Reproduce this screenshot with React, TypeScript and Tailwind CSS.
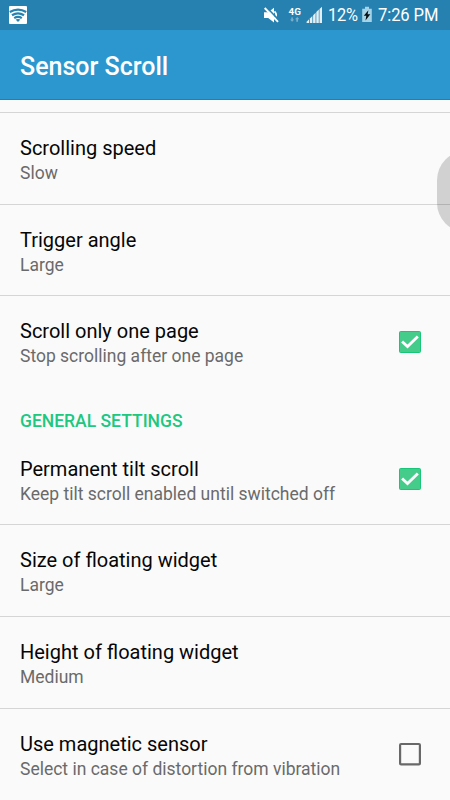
import React from "react";

function CheckBox({ checked }: { checked: boolean }) {
  return (
    <svg width="24" height="24" viewBox="0 0 24 24" className="mr-[28px] shrink-0">
      {checked ? (
        <>
          <rect x="1.5" y="1.5" width="21" height="21" rx="1" fill="#45cc8a" stroke="#18c678" />
          <path d="M4.1 11.4 9.5 16.5 19.8 6.4" fill="none" stroke="#fff" strokeWidth="2.8" />
        </>
      ) : (
        <rect x="2.1" y="2" width="19.8" height="20.4" rx="1" fill="none" stroke="#686868" strokeWidth="2.2" />
      )}
    </svg>
  );
}

type RowProps = { title: string; summary: string; checked?: boolean; divider?: boolean };

function Row({ title, summary, checked, divider = true }: RowProps) {
  return (
    <div
      className={
        "flex h-[91.7px] shrink-0 items-center justify-between border-t pl-5 " +
        (divider ? "border-[#d5d5d5]" : "border-transparent")
      }
    >
      <div className="whitespace-nowrap pt-[4px]">
        <div className="text-[20px] leading-[26px] text-[#060606]">{title}</div>
        <div className="text-[17.5px] leading-[25px] text-[#6a6a6a]">{summary}</div>
      </div>
      {checked !== undefined && <CheckBox checked={checked} />}
    </div>
  );
}

function StatusBar() {
  return (
    <div className="flex h-[30px] shrink-0 items-center bg-[#2681b0] text-white">
      <svg width="324" height="30" viewBox="0 0 324 30" className="shrink-0">
        <rect x="9" y="6" width="18" height="18" rx="1" fill="#fff" />
        <g fill="none" stroke="#2681b0" strokeWidth="2.3">
          <path d="M9.8 12.1Q18 7 26.2 12.1" />
          <path d="M12 15.2Q18 11.4 24 15.2" />
          <path d="M14.2 18.1Q18 15.7 21.8 18.1" />
        </g>
        <path d="M15.6 19.6Q18 18.3 20.4 19.6L18 22Z" fill="#2681b0" />
        <path d="M264 12.3h4.2l5.8-4.6v14.8l-5.8-4.5H264z" fill="#fff" />
        <path d="M274.5 11.4q3.4 3.6 0 7.2" fill="none" stroke="#fff" strokeWidth="1.7" />
        <path d="M266 6.9 279.4 20.6" stroke="#2681b0" strokeWidth="1.6" />
        <path d="M264.7 8 278 21.8" stroke="#fff" strokeWidth="1.9" />
        <text x="288.5" y="15.4" fill="#fff" fontSize="9.8" fontWeight="700" letterSpacing="0.1">4G</text>
        <g fill="#78b0cd">
          <path d="M290 19.5h1.3v-2h1.6v2h1.3l-2.1 2.3z" />
          <path d="M295 19.3 297.2 17l2.1 2.3H298v2.5h-1.7v-2.5z" />
        </g>
        <g fill="#e2eff5">
          <path d="M306.6 23v-1.2l2.5-2.5V23z" />
          <path d="M309.9 23v-4.5l2.5-2.5v7z" />
          <path d="M313.1 23v-7.7l2.5-2.5V23z" />
          <path d="M316.3 23V12.1l2.5-2.5V23z" />
          <path d="M319.5 23V8.9l2.5-2.1V23z" />
        </g>
      </svg>
      <span className="ml-[4px] w-[32px] origin-left scale-x-[0.91] whitespace-nowrap text-[18px] leading-[32px] tracking-[-0.2px]">12%</span>
      <svg width="12" height="18" viewBox="0 0 12 18" className="ml-[1px] shrink-0">
        <path d="M1.2 2.8H4V.8h4v2h2.8V16H1.2z" fill="#a5d3e7" />
        <path d="M7.4 4.2 2.8 9.8h2.5l-.8 4.6 4.8-6.2H6.6z" fill="#080f13" />
      </svg>
      <span className="ml-[5px] origin-left scale-x-[0.92] whitespace-nowrap text-[18px] leading-[32px] tracking-[-0.1px]">7:26 PM</span>
    </div>
  );
}

export default function App() {
  return (
    <div className="relative flex h-[800px] w-[450px] flex-col overflow-hidden bg-[#fafafa] font-['Roboto',sans-serif]">
      <StatusBar />
      <header className="flex h-[70px] shrink-0 items-center border-b border-[#1783b9] bg-[#2c97cf] pl-5 pt-[4px]">
        <h1 className="text-[25px] font-medium leading-[30px] text-white">Sensor Scroll</h1>
      </header>
      <main className="flex flex-col pt-[12px]">
        <Row title="Scrolling speed" summary="Slow" />
        <Row title="Trigger angle" summary="Large" />
        <Row title="Scroll only one page" summary="Stop scrolling after one page" checked />
        <h2 className="flex h-[45.7px] items-end pl-5 text-[17.5px] font-medium leading-[23px] text-[#20c77e]">
          GENERAL SETTINGS
        </h2>
        <Row title="Permanent tilt scroll" summary="Keep tilt scroll enabled until switched off" checked divider={false} />
        <Row title="Size of floating widget" summary="Large" />
        <Row title="Height of floating widget" summary="Medium" />
        <Row title="Use magnetic sensor" summary="Select in case of distortion from vibration" checked={false} />
      </main>
      <div className="absolute -right-[47px] top-[151px] h-[81px] w-[60px] rounded-[29px] bg-black/[0.16]" />
    </div>
  );
}
